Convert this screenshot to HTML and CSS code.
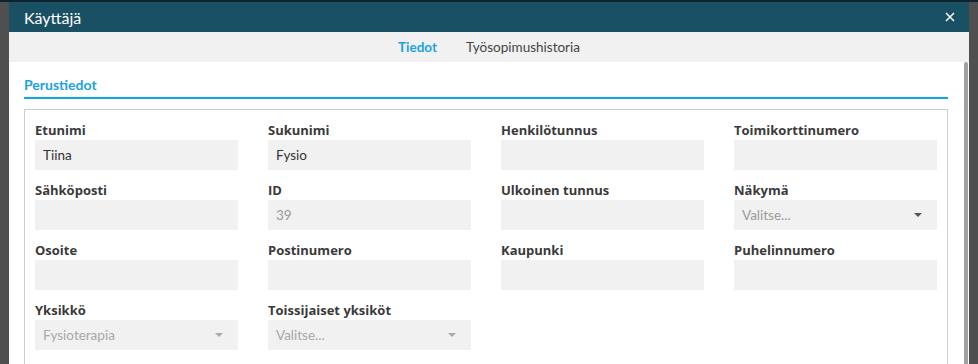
FILE: index.html
```html
<!DOCTYPE html>
<html>

<head>
    <title>Käyttäjä</title>
    <meta charset="utf-8">
    <link rel="stylesheet" href="styles.css">
</head>

<body>
    <div class="modal">
        <div class="modal-header">
            <h2>Käyttäjä</h2>
            <svg class="close" width="10" height="10" viewBox="0 0 10 10">
                <path d="M1 1 L9 9 M9 1 L1 9" stroke="#fff" stroke-width="1.5" fill="none" />
            </svg>
        </div>
        <div class="tabs">
            <span class="tab active">Tiedot</span>
            <span class="tab">Työsopimushistoria</span>
        </div>
        <div class="modal-body">
            <div class="content">
                <div class="section-title">Perustiedot</div>
                <div class="box">
                    <div class="field">
                        <label>Etunimi</label>
                        <div class="input">Tiina</div>
                    </div>
                    <div class="field">
                        <label>Sukunimi</label>
                        <div class="input">Fysio</div>
                    </div>
                    <div class="field">
                        <label>Henkilötunnus</label>
                        <div class="input"></div>
                    </div>
                    <div class="field">
                        <label>Toimikorttinumero</label>
                        <div class="input"></div>
                    </div>

                    <div class="field">
                        <label>Sähköposti</label>
                        <div class="input"></div>
                    </div>
                    <div class="field">
                        <label>ID</label>
                        <div class="input muted">39</div>
                    </div>
                    <div class="field">
                        <label>Ulkoinen tunnus</label>
                        <div class="input"></div>
                    </div>
                    <div class="field">
                        <label>Näkymä</label>
                        <div class="input select muted">Valitse...<span class="caret"></span></div>
                    </div>

                    <div class="field">
                        <label>Osoite</label>
                        <div class="input"></div>
                    </div>
                    <div class="field">
                        <label>Postinumero</label>
                        <div class="input"></div>
                    </div>
                    <div class="field">
                        <label>Kaupunki</label>
                        <div class="input"></div>
                    </div>
                    <div class="field">
                        <label>Puhelinnumero</label>
                        <div class="input"></div>
                    </div>

                    <div class="field">
                        <label>Yksikkö</label>
                        <div class="input select disabled">Fysioterapia<span class="caret"></span></div>
                    </div>
                    <div class="field">
                        <label>Toissijaiset yksiköt</label>
                        <div class="input select disabled">Valitse...<span class="caret"></span></div>
                    </div>
                </div>
            </div>
            <div class="scrollbar"></div>
        </div>
    </div>
</body>

</html>
```

FILE: styles.css
```css
html,
body {
    height: 100%;
}

body {
    margin: 0;
    overflow: hidden;
    font-family: Lato, "Open Sans", sans-serif;
    color: #333;
    background: linear-gradient(#0e232b 0, #0e232b 2px, #4f4f4f 2px);
    padding: 2px 9px 0;
    box-sizing: border-box;
}

.modal {
    background: #fff;
    height: 100%;
    display: flex;
    flex-direction: column;
}

.modal-header {
    height: 30px;
    background: #1a5063;
    display: flex;
    align-items: center;
    justify-content: space-between;
    padding: 0 14px 0 15px;
}

.modal-header h2 {
    margin: 0;
    color: #fff;
    font-size: 16px;
    font-weight: normal;
}

.tabs {
    height: 30px;
    background: #f1f1f1;
    display: flex;
    justify-content: center;
    gap: 29px;
    font-size: 13.5px;
    line-height: 30px;
}

.tab {
    color: #444;
}

.tab.active {
    color: #1aa3e2;
    font-weight: bold;
}

.modal-body {
    flex: 1;
    display: flex;
    min-height: 0;
}

.content {
    flex: 1;
    padding: 0 16px 0 15px;
}

.scrollbar {
    width: 5px;
    margin-right: 1px;
    background: #a0a0a0;
    border-radius: 3px 3px 0 0;
}

.section-title {
    color: #1ba1e2;
    font-weight: bold;
    font-size: 14px;
    line-height: 16px;
    padding: 15px 0 4px;
    border-bottom: 2px solid #09a9e6;
}

.box {
    margin-top: 10px;
    border: 1px solid #ccc;
    border-bottom: none;
    padding: 10px 10px 40px;
    display: grid;
    grid-template-columns: repeat(4, 203px);
    column-gap: 30px;
    row-gap: 10px;
}

.field label {
    display: block;
    font-family: "Open Sans", Lato, sans-serif;
    font-size: 13px;
    font-weight: bold;
    line-height: 20px;
    color: #3a3a3a;
}

.input {
    height: 30px;
    line-height: 30px;
    background: #f1f1f1;
    padding: 0 8px;
    font-size: 13.5px;
    color: #333;
}

.input.muted {
    color: #9a9a9a;
}

.input.select {
    display: flex;
    justify-content: space-between;
    align-items: center;
    padding-right: 15px;
}

.input.disabled {
    color: #a8a8a8;
}

.caret {
    width: 0;
    height: 0;
    border-left: 4px solid transparent;
    border-right: 4px solid transparent;
    border-top: 4px solid #555;
}

.disabled .caret {
    border-top-color: #aaa;
}
```
